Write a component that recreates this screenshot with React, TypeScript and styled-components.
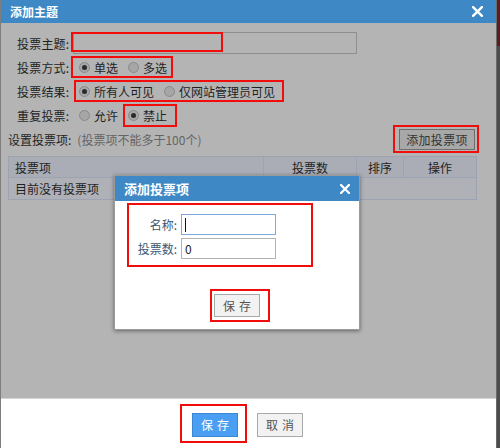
import React from "react";
import styled, { createGlobalStyle } from "styled-components";

const Global = createGlobalStyle`
  html, body { margin: 0; padding: 0; }
  body {
    width: 500px; height: 448px; overflow: hidden;
    background: linear-gradient(#5e1c1f 0 46px, #4c4c4c 46px);
    font-family: "Noto Sans CJK SC", "Noto Sans", sans-serif;
    font-size: 12px;
    color: #1f1f1f;
  }
  * { box-sizing: border-box; }
`;

const Window = styled.div`
  position: relative;
  width: 497px;
  height: 448px;
  display: flex;
  flex-direction: column;
  border-left: 1px solid #7e7e7e;
  border-right: 1px solid #6a6a6a;
`;

const TitleBar = styled.div<{ $h: number; $size: number; $pr: number }>`
  height: ${(p) => p.$h}px;
  flex: none;
  background: #3f88c6;
  color: #fff;
  font-weight: bold;
  font-size: ${(p) => p.$size}px;
  display: flex;
  align-items: center;
  justify-content: space-between;
  padding: 0 ${(p) => p.$pr}px 0 9px;
`;

const Body = styled.div`
  flex: 1;
  background: #b4b4b4;
  padding-top: 8px;
  display: flex;
  flex-direction: column;
`;

const Form = styled.div`
  display: grid;
  grid-template-columns: 56px 1fr;
  grid-auto-rows: 24px;
  align-items: center;
  padding-left: 16px;
`;

const Label = styled.span`
  white-space: nowrap;
  letter-spacing: 0.2px;
`;

const Field = styled.div`
  display: flex;
  align-items: center;
`;

const Marked = styled.span`
  position: relative;
  display: inline-flex;
  align-items: center;
`;

const MarkBox = styled.span<{ $t: number; $r: number; $b: number; $l: number }>`
  position: absolute;
  top: ${(p) => p.$t}px;
  right: ${(p) => p.$r}px;
  bottom: ${(p) => p.$b}px;
  left: ${(p) => p.$l}px;
  border: 2px solid #f20d0d;
  pointer-events: none;
`;

const TextInput = styled.div<{ $w: number; $h: number; $bg: string; $border: string }>`
  width: ${(p) => p.$w}px;
  height: ${(p) => p.$h}px;
  background: ${(p) => p.$bg};
  border: 1px solid ${(p) => p.$border};
  display: flex;
  align-items: center;
  padding-left: 3px;
  font-size: 12px;
  color: #222;
`;

const Caret = styled.span`
  width: 1px;
  height: 14px;
  background: #111;
`;

const RadioGroup = styled.div`
  display: flex;
  align-items: center;
  height: 20px;
  gap: 10px;
  padding-left: 6px;
`;

const Option = styled.span`
  display: inline-flex;
  align-items: center;
  gap: 4px;
  white-space: nowrap;
`;

const Radio = styled.span<{ $on?: boolean }>`
  width: 11px;
  height: 11px;
  border-radius: 50%;
  border: 1px solid #8a8a8a;
  background: #a6a6a6;
  display: inline-flex;
  align-items: center;
  justify-content: center;
  &::after {
    content: "";
    width: 5px;
    height: 5px;
    border-radius: 50%;
    background: ${(p) => (p.$on ? "#2a2a2a" : "transparent")};
  }
`;

const ItemsBar = styled.div`
  display: flex;
  align-items: center;
  justify-content: space-between;
  height: 27px;
  padding: 0 21px 0 7px;
  margin-top: -1px;
`;

const Hint = styled.span`
  color: #646464;
  margin-left: 6px;
`;

const Btn = styled.span<{ $w: number; $h: number; $primary?: boolean; $dim?: boolean }>`
  width: ${(p) => p.$w}px;
  height: ${(p) => p.$h}px;
  display: inline-flex;
  align-items: center;
  justify-content: center;
  font-size: 12px;
  letter-spacing: ${(p) => (p.$w < 50 ? "4px" : "0.3px")};
  text-indent: ${(p) => (p.$w < 50 ? "4px" : "0")};
  background: ${(p) => (p.$primary ? "#4a9ff2" : p.$dim ? "#a8a8a8" : "#f2f2f2")};
  color: ${(p) => (p.$primary ? "#fff" : p.$dim ? "#333" : "#555")};
  border: 1px solid ${(p) => (p.$primary ? "#3b87d2" : p.$dim ? "#6e6e6e" : "#a9a9a9")};
`;

const Table = styled.div`
  margin: 3px 19px 0 7px;
  border: 1px solid #9ca3b3;
  display: grid;
  grid-template-columns: 255px 93px 47px 1fr;
  grid-auto-rows: 21px;
`;

const HeadCell = styled.div<{ $center?: boolean; $last?: boolean }>`
  background: #aaadb5;
  border-bottom: 1px solid #9ca3b3;
  border-right: ${(p) => (p.$last ? "none" : "1px solid #9ca3b3")};
  display: flex;
  align-items: center;
  justify-content: ${(p) => (p.$center ? "center" : "flex-start")};
  padding-left: ${(p) => (p.$center ? 0 : 6)}px;
`;

const EmptyRow = styled.div`
  grid-column: 1 / -1;
  background: #afb1b7;
  display: flex;
  align-items: center;
  padding-left: 6px;
`;

const Footer = styled.div`
  height: 50px;
  flex: none;
  background: #fff;
  border-top: 1px solid #d4d4d4;
  display: flex;
  align-items: center;
  justify-content: center;
  gap: 19px;
  padding: 2px 2px 0 0;
`;

const SubDialog = styled.div`
  position: absolute;
  left: 113px;
  top: 175px;
  width: 246px;
  height: 155px;
  background: #fff;
  border: 1px solid #9a9a9a;
  box-shadow: 0 1px 4px rgba(0, 0, 0, 0.45);
  display: flex;
  flex-direction: column;
`;

const SubBody = styled.div`
  flex: 1;
  display: flex;
  flex-direction: column;
  padding: 2px 0 0 12px;
`;

const FieldGroup = styled.div`
  width: 186px;
  height: 64px;
  border: 2px solid #f20d0d;
  display: grid;
  grid-template-columns: 48px 95px;
  grid-auto-rows: 21px;
  column-gap: 4px;
  row-gap: 3px;
  padding-top: 9px;
  align-items: center;
`;

const SubLabel = styled.span`
  text-align: right;
  color: #3b5773;
  white-space: nowrap;
`;

const SubActions = styled.div`
  display: flex;
  justify-content: center;
  padding: 27px 12px 0 0;
`;

const Close = ({ size }: { size: number }) => (
  <svg width={size} height={size} viewBox="0 0 10 10">
    <path d="M1 1L9 9M9 1L1 9" stroke="#fff" strokeWidth="2.2" strokeLinecap="square" />
  </svg>
);

export default function App() {
  return (
    <>
      <Global />
      <Window>
        <TitleBar $h={23} $size={12} $pr={13}>
          <span>添加主题</span>
          <Close size={11} />
        </TitleBar>
        <Body>
          <Form>
            <Label>投票主题:</Label>
            <Field>
              <Marked>
                <TextInput $w={284} $h={22} $bg="#b4b4b4" $border="#8e8e8e" />
                <MarkBox $t={0} $r={134} $b={2} $l={-2} />
              </Marked>
            </Field>
            <Label>投票方式:</Label>
            <Field>
              <Marked>
                <RadioGroup>
                  <Option><Radio $on />单选</Option>
                  <Option><Radio />多选</Option>
                </RadioGroup>
                <MarkBox $t={-1} $r={-6} $b={-1} $l={-2} />
              </Marked>
            </Field>
            <Label>投票结果:</Label>
            <Field>
              <Marked>
                <RadioGroup>
                  <Option><Radio $on />所有人可见</Option>
                  <Option><Radio />仅网站管理员可见</Option>
                </RadioGroup>
                <MarkBox $t={-1} $r={-9} $b={-1} $l={1} />
              </Marked>
            </Field>
            <Label>重复投票:</Label>
            <Field>
              <RadioGroup>
                <Option><Radio />允许</Option>
                <Marked>
                  <Option><Radio $on />禁止</Option>
                  <MarkBox $t={-3} $r={-10} $b={-3} $l={-5} />
                </Marked>
              </RadioGroup>
            </Field>
          </Form>
          <ItemsBar>
            <span>
              设置投票项:<Hint>(投票项不能多于100个)</Hint>
            </span>
            <Marked>
              <Btn $w={76} $h={21} $dim>添加投票项</Btn>
              <MarkBox $t={-4} $r={-4} $b={-3} $l={-6} />
            </Marked>
          </ItemsBar>
          <Table>
            <HeadCell>投票项</HeadCell>
            <HeadCell $center>投票数</HeadCell>
            <HeadCell $center>排序</HeadCell>
            <HeadCell $center $last>操作</HeadCell>
            <EmptyRow>目前没有投票项</EmptyRow>
          </Table>
        </Body>
        <Footer>
          <Marked>
            <Btn $w={46} $h={24} $primary>保存</Btn>
            <MarkBox $t={-9} $r={-9} $b={-6} $l={-12} />
          </Marked>
          <Btn $w={46} $h={24}>取消</Btn>
        </Footer>
        <SubDialog>
          <TitleBar $h={25} $size={13} $pr={9}>
            <span>添加投票项</span>
            <Close size={10} />
          </TitleBar>
          <SubBody>
            <FieldGroup>
              <SubLabel>名称:</SubLabel>
              <TextInput $w={95} $h={21} $bg="#fff" $border="#7fa9d9">
                <Caret />
              </TextInput>
              <SubLabel>投票数:</SubLabel>
              <TextInput $w={95} $h={21} $bg="#fff" $border="#b3b3b3">0</TextInput>
            </FieldGroup>
            <SubActions>
              <Marked>
                <Btn $w={46} $h={23}>保存</Btn>
                <MarkBox $t={-5} $r={-10} $b={-5} $l={-4} />
              </Marked>
            </SubActions>
          </SubBody>
        </SubDialog>
      </Window>
    </>
  );
}
